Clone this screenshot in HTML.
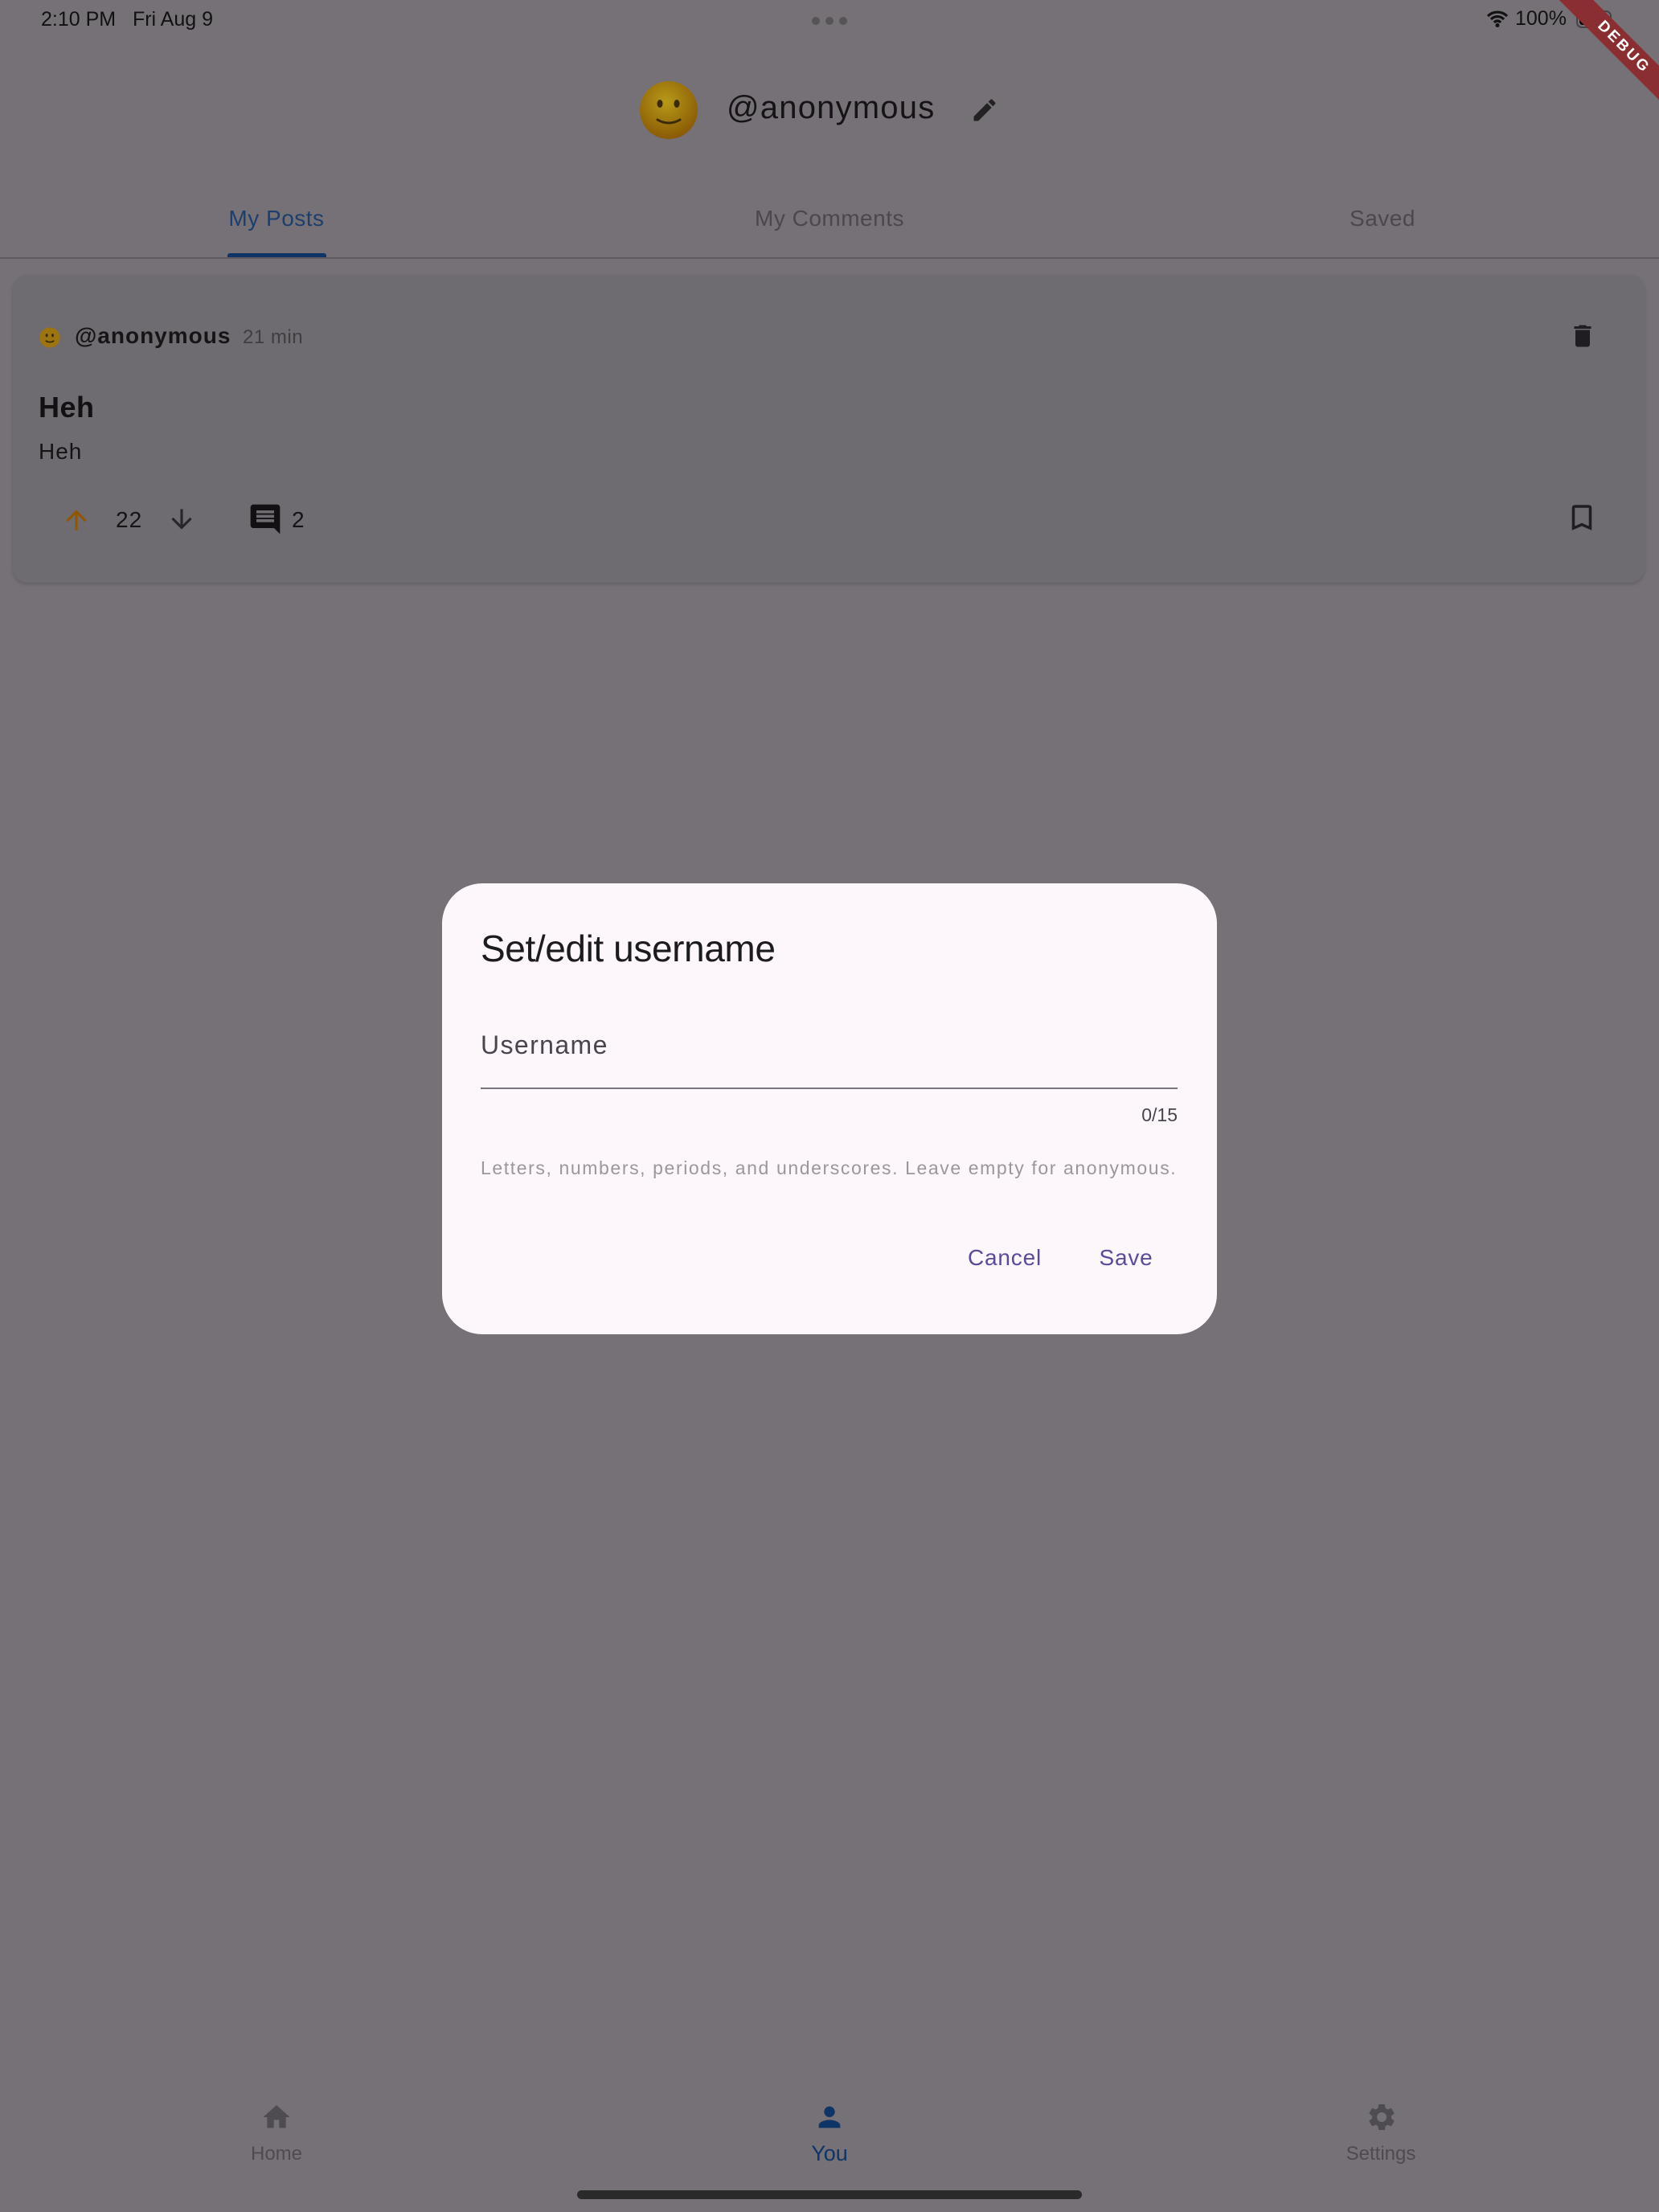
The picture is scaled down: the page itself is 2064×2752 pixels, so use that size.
<!DOCTYPE html>
<html><head><meta charset="utf-8">
<style>
*{margin:0;padding:0;box-sizing:border-box}
html,body{width:2064px;height:2752px;overflow:hidden}
body{background:#767176;font-family:"Liberation Sans",sans-serif;position:relative;color:#141214}
.a{position:absolute;white-space:nowrap}
</style></head><body>

<!-- status bar -->
<div class="a" style="left:51px;top:10px;font-size:25px;color:#111">2:10 PM&nbsp;&nbsp;&nbsp;Fri Aug 9</div>
<div class="a" style="left:1010px;top:18px;width:44px;height:10px">
 <svg width="44" height="10"><circle cx="5" cy="5" r="5" fill="#555"/><circle cx="22" cy="5" r="5" fill="#555"/><circle cx="39" cy="5" r="5" fill="#555"/></svg></div>
<svg class="a" style="left:1849px;top:12px" width="28" height="22" viewBox="0 0 28 22"><path d="M2 8a17 17 0 0 1 24 0M6 12a11 11 0 0 1 16 0M10 16a5 5 0 0 1 8 0" stroke="#111" stroke-width="3.2" fill="none"/><circle cx="14" cy="19.5" r="2.5" fill="#111"/></svg>
<div class="a" style="left:1885px;top:9px;font-size:25px;color:#111">100%</div>
<div class="a" style="left:1961px;top:13px;width:44px;height:22px;border:2px solid #444;border-radius:7px;padding:2px"><div style="width:100%;height:100%;background:#000;border-radius:4px"></div></div>
<!-- debug banner -->
<div class="a" style="left:1920px;top:44px;width:200px;height:30px;background:#8a2e31;transform:rotate(45deg);color:#fff;font-weight:bold;font-size:19px;text-align:center;line-height:30px;letter-spacing:3px;z-index:3">DEBUG</div>

<!-- header -->
<svg class="a" style="left:795px;top:100px" width="74" height="74" viewBox="0 0 74 74">
 <defs><radialGradient id="g" cx="45%" cy="35%" r="65%"><stop offset="0" stop-color="#b79a18"/><stop offset="1" stop-color="#8a5a05"/></radialGradient></defs>
 <circle cx="37" cy="37" r="36" fill="url(#g)"/>
 <ellipse cx="26" cy="29" rx="3.5" ry="5" fill="#3a2a0a"/><ellipse cx="47" cy="29" rx="3.5" ry="5" fill="#3a2a0a"/>
 <path d="M23 49q14 8 28 0" stroke="#3a2a0a" stroke-width="3" fill="none" stroke-linecap="round"/></svg>
<div class="a" style="left:904px;top:112px;font-size:40px;letter-spacing:1.2px;color:#151316">@anonymous</div>
<svg class="a" style="left:1207px;top:119px" width="36" height="36" viewBox="0 0 24 24"><path d="M3 17.25V21h3.75L17.81 9.94l-3.75-3.75L3 17.25zM20.71 7.04a1 1 0 0 0 0-1.41l-2.34-2.34a1 1 0 0 0-1.41 0l-1.83 1.83 3.75 3.75 1.83-1.83z" fill="#222"/></svg>

<!-- tabs -->
<div class="a" style="left:0;width:688px;top:256px;text-align:center;font-size:28px;color:#1c3f6e;letter-spacing:.5px">My Posts</div>
<div class="a" style="left:688px;width:688px;top:256px;text-align:center;font-size:28px;color:#4b474c;letter-spacing:.5px">My Comments</div>
<div class="a" style="left:1376px;width:688px;top:256px;text-align:center;font-size:28px;color:#4b474c;letter-spacing:.5px">Saved</div>
<div class="a" style="left:283px;top:315px;width:123px;height:6px;background:#0f3566;border-radius:3px 3px 0 0"></div>
<div class="a" style="left:0;top:320px;width:2064px;height:2px;background:#5e5a5f"></div>

<!-- card -->
<div class="a" style="left:16px;top:342px;width:2030px;height:383px;background:#6f6c71;border-radius:18px;box-shadow:0 2px 4px rgba(0,0,0,.18)"></div>
<svg class="a" style="left:49px;top:407px" width="26" height="26" viewBox="0 0 74 74"><circle cx="37" cy="37" r="36" fill="#9c7410"/><ellipse cx="26" cy="29" rx="4" ry="6" fill="#3a2a0a"/><ellipse cx="47" cy="29" rx="4" ry="6" fill="#3a2a0a"/><path d="M22 48q15 10 30 0" stroke="#3a2a0a" stroke-width="5" fill="none"/></svg>
<div class="a" style="left:93px;top:402px;font-size:28px;font-weight:bold;letter-spacing:1px;color:#161416">@anonymous</div>
<div class="a" style="left:302px;top:406px;font-size:24px;color:#403d41;letter-spacing:.5px">21 min</div>
<svg class="a" style="left:1951px;top:400px" width="36" height="36" viewBox="0 0 24 24"><path d="M6 19c0 1.1.9 2 2 2h8c1.1 0 2-.9 2-2V7H6v12zM19 4h-3.5l-1-1h-5l-1 1H5v2h14V4z" fill="#1f1d21"/></svg>
<div class="a" style="left:48px;top:486px;font-size:36px;font-weight:bold;color:#121013;letter-spacing:.5px">Heh</div>
<div class="a" style="left:48px;top:546px;font-size:28px;color:#151316;letter-spacing:1px">Heh</div>
<svg class="a" style="left:76px;top:628px" width="38" height="38" viewBox="0 0 24 24"><path d="M4 12l1.41 1.41L11 7.83V20h2V7.83l5.58 5.59L20 12l-8-8-8 8z" fill="#925600"/></svg>
<div class="a" style="left:144px;top:631px;font-size:28px;color:#151316;letter-spacing:1px">22</div>
<svg class="a" style="left:207px;top:627px" width="38" height="38" viewBox="0 0 24 24"><path d="M20 12l-1.41-1.41L13 16.17V4h-2v12.17l-5.58-5.59L4 12l8 8 8-8z" fill="#28262a"/></svg>
<svg class="a" style="left:308px;top:624px" width="44" height="44" viewBox="0 0 24 24"><path d="M21.99 4c0-1.1-.89-2-1.990-2H4c-1.1 0-2 .9-2 2v12c0 1.1.9 2 2 2h14l4 4-.01-18zM18 14H6v-2h12v2zm0-3H6V9h12v2zm0-3H6V6h12v2z" fill="#121013"/></svg>
<div class="a" style="left:363px;top:631px;font-size:28px;color:#151316">2</div>
<svg class="a" style="left:1947px;top:622px" width="42" height="44" viewBox="0 0 24 24"><path d="M17 3H7c-1.1 0-2 .9-2 2v16l7-3 7 3V5c0-1.1-.9-2-2-2zm0 15l-5-2.18L7 18V5h10v13z" fill="#1f1d21"/></svg>

<!-- dialog -->
<div class="a" style="left:550px;top:1099px;width:964px;height:561px;background:#fdf7fc;border-radius:50px"></div>
<div class="a" style="left:598px;top:1153px;font-size:46px;color:#1c1b1f;letter-spacing:-.4px">Set/edit username</div>
<div class="a" style="left:598px;top:1282px;font-size:32px;color:#49454f;letter-spacing:1.4px">Username</div>
<div class="a" style="left:598px;top:1353px;width:867px;height:2px;background:#79747e"></div>
<div class="a" style="left:1365px;width:100px;top:1374px;text-align:right;font-size:23px;color:#49454f">0/15</div>
<div class="a" style="left:598px;top:1440px;font-size:23px;color:#9a979d;letter-spacing:1.6px">Letters, numbers, periods, and underscores. Leave empty for anonymous.</div>
<div class="a" style="left:1200px;width:100px;top:1549px;text-align:center;font-size:28px;color:#5a4a9c;letter-spacing:.8px">Cancel</div>
<div class="a" style="left:1351px;width:100px;top:1549px;text-align:center;font-size:28px;color:#5a4a9c;letter-spacing:.8px">Save</div>

<!-- bottom nav -->
<svg class="a" style="left:324px;top:2614px" width="40" height="40" viewBox="0 0 24 24"><path d="M10 20v-6h4v6h5v-8h3L12 3 2 12h3v8z" fill="#4e4c50"/></svg>
<div class="a" style="left:244px;width:200px;top:2666px;text-align:center;font-size:24px;color:#4e4b50">Home</div>
<svg class="a" style="left:1012px;top:2614px" width="40" height="40" viewBox="0 0 24 24"><path d="M12 12c2.21 0 4-1.79 4-4s-1.79-4-4-4-4 1.79-4 4 1.79 4 4 4zm0 2c-2.67 0-8 1.34-8 4v2h16v-2c0-2.66-5.33-4-8-4z" fill="#0f3566"/></svg>
<div class="a" style="left:932px;width:200px;top:2664px;text-align:center;font-size:27px;color:#0f3566">You</div>
<svg class="a" style="left:1699px;top:2614px" width="40" height="40" viewBox="0 0 24 24"><path d="M19.14 12.94c.04-.3.06-.61.06-.94 0-.32-.02-.64-.07-.94l2.03-1.58a.49.49 0 0 0 .12-.61l-1.92-3.32a.49.49 0 0 0-.59-.22l-2.39.96c-.5-.38-1.03-.7-1.62-.94l-.36-2.54a.48.48 0 0 0-.48-.41h-3.84c-.24 0-.43.17-.47.41l-.36 2.54c-.59.24-1.13.57-1.62.94l-2.39-.96a.48.48 0 0 0-.59.22L2.74 8.87c-.12.21-.08.47.12.61l2.03 1.58c-.05.3-.09.63-.09.94s.02.64.07.94l-2.03 1.58a.49.49 0 0 0-.12.61l1.92 3.32c.12.22.37.29.59.22l2.39-.96c.5.38 1.03.7 1.62.94l.36 2.54c.05.24.24.41.48.41h3.84c.24 0 .44-.17.47-.41l.36-2.54c.59-.24 1.13-.56 1.62-.94l2.39.96c.22.08.47 0 .59-.22l1.92-3.32c.12-.22.07-.47-.12-.61l-2.01-1.58zM12 15.6c-1.98 0-3.6-1.62-3.6-3.6s1.62-3.6 3.6-3.6 3.6 1.62 3.6 3.6-1.62 3.6-3.6 3.6z" fill="#4e4c50"/></svg>
<div class="a" style="left:1618px;width:200px;top:2666px;text-align:center;font-size:24px;color:#4e4b50">Settings</div>
<div class="a" style="left:718px;top:2725px;width:628px;height:11px;background:#2a2a2a;border-radius:6px"></div>
</body></html>
